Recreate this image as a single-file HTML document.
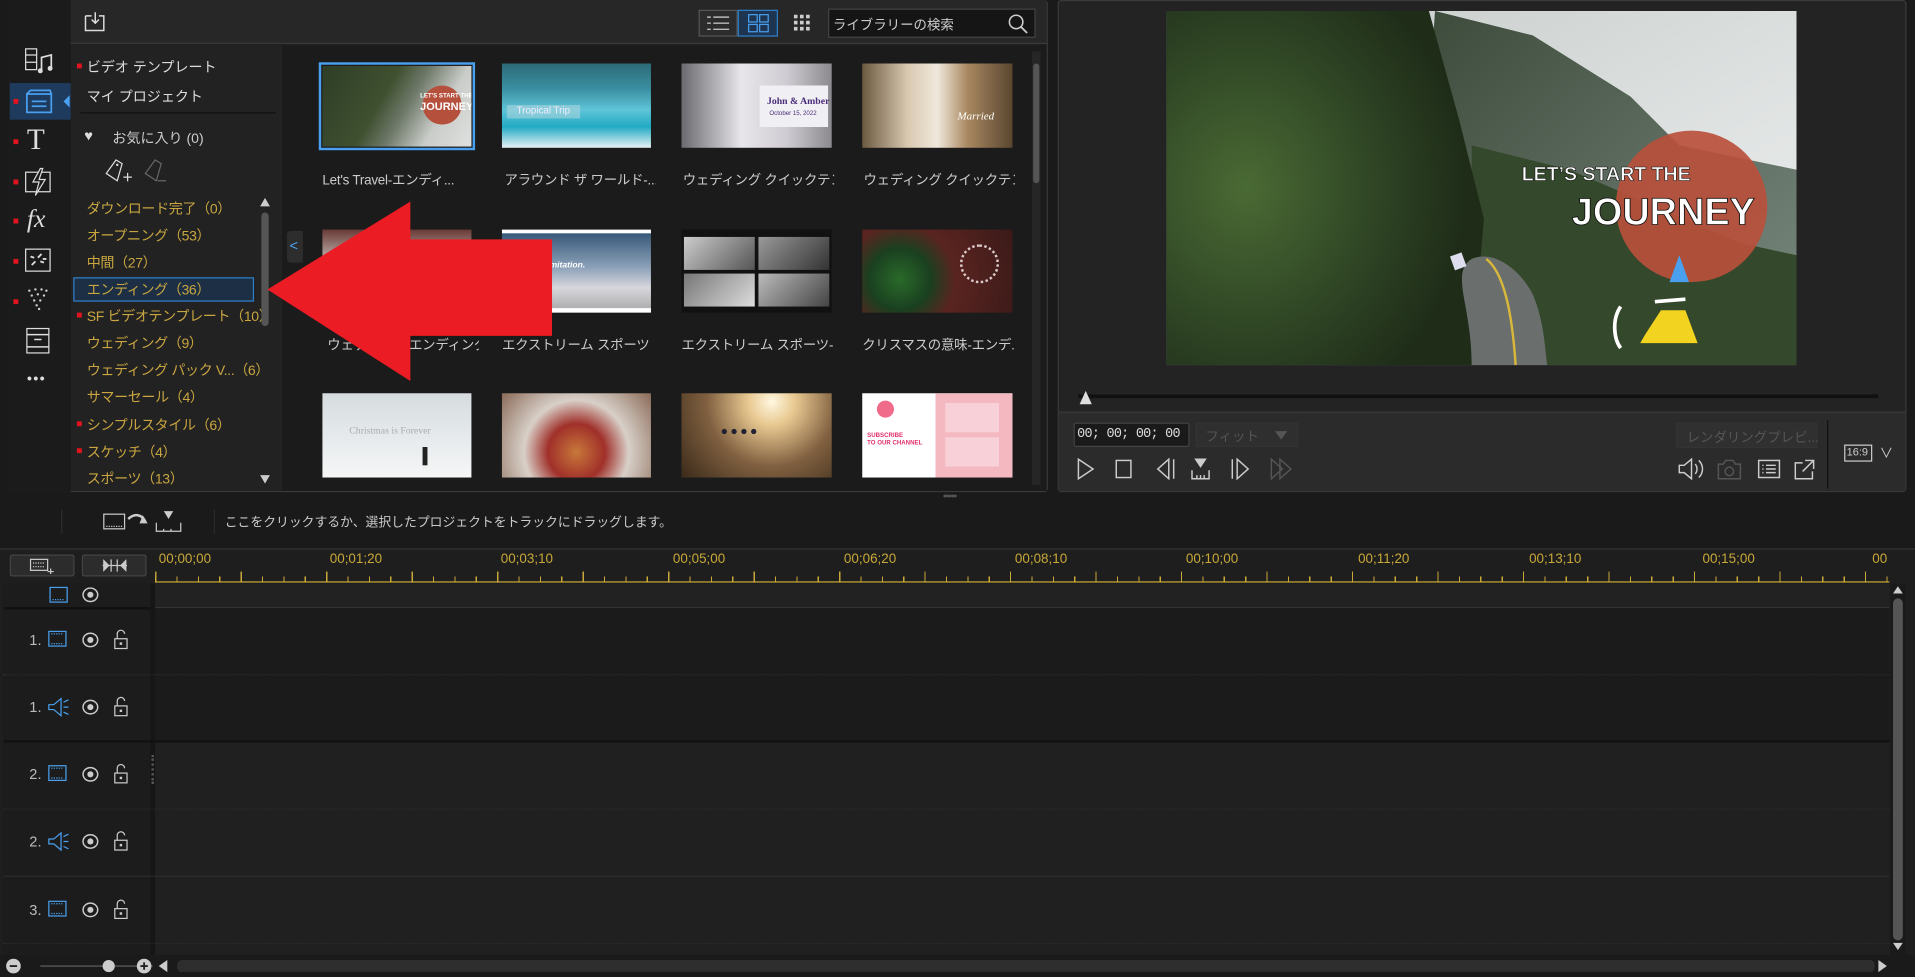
<!DOCTYPE html>
<html><head><meta charset="utf-8"><style>
*{margin:0;padding:0;box-sizing:border-box}
html,body{width:1915px;height:977px;overflow:hidden;background:#1a1a1a}
#w{position:absolute;left:0;top:0;width:1568px;height:800px;transform:scale(1.22130);transform-origin:0 0;font-family:"Liberation Sans","Noto Sans CJK JP",sans-serif;color:#ccc}
.a{position:absolute}
.t{position:absolute;white-space:nowrap}
.cat{position:absolute;left:71px;font-size:11.5px;color:#c9a640;white-space:nowrap;letter-spacing:-.3px}
.dot{position:absolute;left:63px;width:4px;height:4px;background:#e0141e}
.ldot{position:absolute;left:11px;width:4px;height:4px;background:#e0141e}
.th{position:absolute;overflow:hidden}
.lbl{position:absolute;font-size:11px;color:#ccc;white-space:nowrap;width:124px;overflow:hidden;letter-spacing:-.2px}
.ru{position:absolute;top:452px;font-size:11px;color:#c8a838}
.tn{position:absolute;left:24px;font-size:12px;color:#bbb}
</style></head><body><div id="w">

<div class="a" style="left:8px;top:0;width:850px;height:403px;background:#202020;border:1px solid #3a3a3a;border-radius:3px"></div>
<div class="a" style="left:8px;top:0;width:50px;height:403px;background:#1b1b1b"></div>
<div class="a" style="left:8px;top:68px;width:50px;height:30px;background:#1e3a5c"></div>
<div class="a" style="left:58px;top:0;width:799px;height:36px;background:#272727;border-bottom:1px solid #3a3a3a"></div>
<div class="a" style="left:58px;top:37px;width:173px;height:365px;background:#222"></div>
<div class="a" style="left:231px;top:37px;width:626px;height:365px;background:#1b1b1b"></div>

<svg class="a" style="left:68px;top:9px" width="20" height="18" viewBox="0 0 20 18"><path d="M2 4h5M13 4h4v12H2V4" fill="none" stroke="#ddd" stroke-width="1.2"/><path d="M10 1v9M7 7l3 3 3-3" fill="none" stroke="#ddd" stroke-width="1.2"/></svg>
<div class="a" style="left:572px;top:8px;width:32px;height:22px;border:1px solid #555;background:#2c2c2c"></div>
<svg class="a" style="left:578px;top:12px" width="20" height="14"><path d="M1 2h3M6 2h13M1 7h3M6 7h13M1 12h3M6 12h13" stroke="#bbb" stroke-width="1.2"/></svg>
<div class="a" style="left:604px;top:8px;width:33px;height:22px;border:1px solid #2f7fc8;background:#1d3550"></div>
<svg class="a" style="left:612px;top:11px" width="18" height="16"><rect x="1" y="1" width="7" height="6" fill="none" stroke="#4aa0ef"/><rect x="10" y="1" width="7" height="6" fill="none" stroke="#4aa0ef"/><rect x="1" y="9" width="7" height="6" fill="none" stroke="#4aa0ef"/><rect x="10" y="9" width="7" height="6" fill="none" stroke="#4aa0ef"/></svg>
<svg class="a" style="left:650px;top:12px" width="14" height="14"><g fill="#ccc"><rect x="0" y="0" width="3" height="3"/><rect x="5" y="0" width="3" height="3"/><rect x="10" y="0" width="3" height="3"/><rect x="0" y="5" width="3" height="3"/><rect x="5" y="5" width="3" height="3"/><rect x="10" y="5" width="3" height="3"/><rect x="0" y="10" width="3" height="3"/><rect x="5" y="10" width="3" height="3"/><rect x="10" y="10" width="3" height="3"/></g></svg>
<div class="a" style="left:678px;top:7px;width:170px;height:24px;background:#151515;border:1px solid #444"></div>
<div class="t" style="left:682px;top:12px;font-size:11px;color:#ccc">ライブラリーの検索</div>
<svg class="a" style="left:825px;top:11px" width="17" height="17"><circle cx="7" cy="7" r="5.5" fill="none" stroke="#ccc" stroke-width="1.3"/><path d="M11 11l5 5" stroke="#ccc" stroke-width="1.5"/></svg>

<svg class="a" style="left:20px;top:39px" width="24" height="22"><rect x="1" y="1" width="9" height="17" fill="none" stroke="#ddd"/><path d="M1 6h9M1 12h9" stroke="#ddd"/><path d="M14 19V8l8-2v11" fill="none" stroke="#ddd" stroke-width="1.4"/><circle cx="13" cy="19" r="2" fill="#ddd"/><circle cx="21" cy="17" r="2" fill="#ddd"/></svg>
<svg class="a" style="left:21px;top:73px" width="22" height="20"><rect x="1" y="4" width="20" height="15" fill="none" stroke="#4aa0ef" stroke-width="1.4"/><path d="M1 4l3-3h16l1 3" fill="none" stroke="#4aa0ef" stroke-width="1.4"/><path d="M5 10h12M5 14h12" stroke="#4aa0ef" stroke-width="1.4"/></svg>
<div class="a" style="left:52px;top:78px;width:0;height:0;border-top:5px solid transparent;border-bottom:5px solid transparent;border-right:5px solid #4aa0ef"></div>
<div class="t" style="left:22px;top:102px;font-family:'Liberation Serif',serif;font-size:24px;color:#ddd">T</div>
<svg class="a" style="left:20px;top:137px" width="24" height="24"><rect x="1" y="4" width="20" height="16" fill="none" stroke="#ddd"/><path d="M13 1l-6 11h5l-3 11 8-13h-5l3-9z" fill="#1b1b1b" stroke="#ddd"/></svg>
<div class="t" style="left:22px;top:167px;font-family:'Liberation Serif',serif;font-style:italic;font-size:21px;color:#ddd">fx</div>
<svg class="a" style="left:20px;top:203px" width="22" height="20"><rect x="1" y="1" width="20" height="18" fill="none" stroke="#ddd"/><path d="M6 14l3-3M14 5l-3 3M5 7l3 1M16 12l-3-1M15 9h3" stroke="#ddd" stroke-width="1.5"/></svg>
<svg class="a" style="left:21px;top:235px" width="20" height="22"><g fill="#ccc"><circle cx="3" cy="3" r="1"/><circle cx="8" cy="2" r="1"/><circle cx="13" cy="2" r="1"/><circle cx="17" cy="3" r="1"/><circle cx="5" cy="7" r="1"/><circle cx="10" cy="6" r="1"/><circle cx="15" cy="7" r="1"/><circle cx="7" cy="11" r="1"/><circle cx="12" cy="11" r="1"/><circle cx="9" cy="15" r="1"/><circle cx="11" cy="18" r="1"/></g></svg>
<svg class="a" style="left:21px;top:268px" width="20" height="22"><rect x="1" y="1" width="18" height="20" fill="none" stroke="#ddd"/><path d="M1 6h18M1 16h18M7 10h6" stroke="#ddd" stroke-width="1.2"/></svg>
<div class="t" style="left:22px;top:303px;font-size:12px;color:#ddd;letter-spacing:1px">•••</div>
<div class="ldot" style="top:81px"></div><div class="ldot" style="top:114px"></div><div class="ldot" style="top:147px"></div><div class="ldot" style="top:179px"></div><div class="ldot" style="top:212px"></div><div class="ldot" style="top:245px"></div>

<div class="dot" style="top:52px"></div>
<div class="t" style="left:71px;top:47px;font-size:11.5px;color:#ddd">ビデオ テンプレート</div>
<div class="t" style="left:71px;top:71px;font-size:11.5px;color:#ddd">マイ プロジェクト</div>
<div class="a" style="left:66px;top:92px;width:160px;height:1px;background:#111"></div>
<div class="t" style="left:69px;top:104px;font-size:12px;color:#ddd;line-height:14px">♥</div>
<div class="t" style="left:92px;top:105px;font-size:11.5px;color:#ccc">お気に入り (0)</div>
<svg class="a" style="left:84px;top:128px" width="60" height="26"><path d="M3 14L11 3l5 3-4 14z" fill="none" stroke="#ddd"/><circle cx="12" cy="7" r="1" fill="#ddd"/><path d="M17 17h7M20.5 13.5v7" stroke="#ddd"/><path d="M35 14l8-11 5 3-4 14z" fill="none" stroke="#666"/><path d="M45 20h7" stroke="#666"/></svg>
<div class="cat" style="top:163px">ダウンロード完了（0）</div>
<div class="cat" style="top:185px">オープニング（53）</div>
<div class="cat" style="top:207px">中間（27）</div>
<div class="a" style="left:60px;top:227px;width:148px;height:20px;background:#1c2f45;border:1px solid #2f7fc8"></div>
<div class="cat" style="top:229px">エンディング（36）</div>
<div class="dot" style="top:256px"></div><div class="cat" style="top:251px">SF ビデオテンプレート（10）</div>
<div class="cat" style="top:273px">ウェディング（9）</div>
<div class="cat" style="top:295px">ウェディング パック V...（6）</div>
<div class="cat" style="top:317px">サマーセール（4）</div>
<div class="dot" style="top:345px"></div><div class="cat" style="top:340px">シンプルスタイル（6）</div>
<div class="dot" style="top:367px"></div><div class="cat" style="top:362px">スケッチ（4）</div>
<div class="cat" style="top:384px">スポーツ（13）</div>
<div class="a" style="left:213px;top:162px;width:0;height:0;border-left:4px solid transparent;border-right:4px solid transparent;border-bottom:7px solid #ccc"></div>
<div class="a" style="left:214px;top:174px;width:6px;height:93px;background:#555;border-radius:3px"></div>
<div class="a" style="left:213px;top:389px;width:0;height:0;border-left:4px solid transparent;border-right:4px solid transparent;border-top:7px solid #ccc"></div>
<div class="a" style="left:235px;top:189px;width:13px;height:26px;background:#2d2d2d;border-radius:3px 0 0 3px"></div>
<div class="t" style="left:237px;top:194px;font-size:12px;color:#4aa0ef">&lt;</div>

<div class="a" style="left:261px;top:51px;width:128px;height:72px;border:2px solid #4aa0ef"></div>
<div class="th" style="left:264px;top:54px;width:122px;height:66px;background:linear-gradient(120deg,#2e3d26 0%,#3f5030 40%,#6d7868 55%,#c9ccc8 75%,#dfe1e0 100%)">
<div class="a" style="left:82px;top:16px;width:32px;height:32px;border-radius:50%;background:#b5503d"></div>
<div class="t" style="left:80px;top:22px;font-size:5px;color:#fff;font-weight:bold">LET'S START THE</div>
<div class="t" style="left:80px;top:28px;font-size:9px;color:#fff;font-weight:bold">JOURNEY</div></div>
<div class="th" style="left:411px;top:52px;width:122px;height:69px;background:linear-gradient(180deg,#2d6a78 0%,#3a8fa0 30%,#5fc4d8 55%,#22aac4 75%,#e8f2f4 100%)">
<div class="a" style="left:4px;top:34px;width:60px;height:11px;background:rgba(200,220,225,.45)"></div>
<div class="t" style="left:12px;top:34px;font-size:8px;color:#eef">Tropical Trip</div></div>
<div class="th" style="left:558px;top:52px;width:123px;height:69px;background:linear-gradient(90deg,#6a6a70,#e8e6ea 40%,#cfcbd2 70%,#8c8a8e)">
<div class="a" style="left:64px;top:18px;width:56px;height:34px;background:#f0eff4"></div>
<div class="t" style="left:70px;top:26px;font-size:8px;color:#4a2d7a;font-weight:bold;font-family:'Liberation Serif',serif">John &amp; Amber</div>
<div class="t" style="left:72px;top:38px;font-size:5px;color:#4a2d7a">October 15, 2022</div></div>
<div class="th" style="left:706px;top:52px;width:123px;height:69px;background:linear-gradient(90deg,#6c5a40,#d8c8b0 30%,#f0e8dc 50%,#a88860 70%,#5a4630)">
<div class="t" style="left:78px;top:38px;font-size:9px;color:#fff;font-style:italic;font-family:'Liberation Serif',serif">Married</div></div>
<div class="lbl" style="left:264px;top:139px">Let's Travel-エンディ...</div>
<div class="lbl" style="left:413px;top:139px">アラウンド ザ ワールド-...</div>
<div class="lbl" style="left:559px;top:139px">ウェディング クイックテン...</div>
<div class="lbl" style="left:707px;top:139px">ウェディング クイックテン...</div>

<div class="th" style="left:264px;top:188px;width:122px;height:68px;background:linear-gradient(180deg,#6a3a36,#c8c0bc 40%,#3a2a28)"></div>
<div class="th" style="left:411px;top:188px;width:122px;height:68px;background:linear-gradient(180deg,#fff 0,#fff 4%,#3a5a7a 5%,#8aa0b8 45%,#d8d8dc 70%,#b0aeb0 94%,#fff 95%)">
<div class="t" style="left:4px;top:26px;font-size:7px;color:#fff;font-style:italic;font-weight:bold">Up Your Limitation.</div></div>
<div class="th" style="left:558px;top:188px;width:123px;height:68px;background:#111">
<div class="a" style="left:2px;top:6px;width:58px;height:27px;background:linear-gradient(135deg,#ccc,#555)"></div><div class="a" style="left:63px;top:6px;width:58px;height:27px;background:linear-gradient(135deg,#999,#333)"></div>
<div class="a" style="left:2px;top:36px;width:58px;height:27px;background:linear-gradient(135deg,#777,#ddd)"></div><div class="a" style="left:63px;top:36px;width:58px;height:27px;background:linear-gradient(135deg,#bbb,#444)"></div></div>
<div class="th" style="left:706px;top:188px;width:123px;height:68px;background:radial-gradient(circle at 25% 60%,#2a6a2a 0,#1a4020 25%,#5a2420 45%,#3a1a18 100%)">
<div class="a" style="left:80px;top:12px;width:32px;height:32px;border-radius:50%;border:2px dotted #dcc"></div></div>
<div class="lbl" style="left:268px;top:274px">ウェディング エンディング</div>
<div class="lbl" style="left:411px;top:274px">エクストリーム スポーツ ...</div>
<div class="lbl" style="left:558px;top:274px">エクストリーム スポーツ-...</div>
<div class="lbl" style="left:706px;top:274px">クリスマスの意味-エンデ...</div>

<div class="th" style="left:264px;top:322px;width:122px;height:69px;background:linear-gradient(180deg,#d6dcde,#e8ecee 60%,#f6f6f6)">
<div class="t" style="left:22px;top:26px;font-size:8px;color:#aaa;font-family:'Liberation Serif',serif">Christmas is Forever</div>
<div class="a" style="left:82px;top:44px;width:4px;height:15px;background:#222"></div></div>
<div class="th" style="left:411px;top:322px;width:122px;height:69px;background:radial-gradient(circle at 50% 70%,#c8783a,#a0302a 30%,#d8d0c8 55%,#8a6a58)"></div>
<div class="th" style="left:558px;top:322px;width:123px;height:69px;background:radial-gradient(circle at 60% 10%,#fff8e0,#e8c890 20%,#806040 55%,#3a2a1a)">
<div class="t" style="left:32px;top:26px;font-size:10px;color:#223;letter-spacing:2px">●●●●</div></div>
<div class="th" style="left:706px;top:322px;width:123px;height:69px;background:#fff">
<div class="a" style="left:60px;top:0;width:63px;height:69px;background:#f4b8c0"></div>
<div class="a" style="left:68px;top:8px;width:44px;height:24px;background:#f8d0d8"></div>
<div class="a" style="left:68px;top:36px;width:44px;height:24px;background:#f8d0d8"></div>
<div class="a" style="left:12px;top:6px;width:14px;height:14px;border-radius:50%;background:#f06a8a"></div>
<div class="t" style="left:4px;top:32px;font-size:5px;color:#e0306a;font-weight:bold">SUBSCRIBE<br>TO OUR CHANNEL</div></div>
<div class="a" style="left:845px;top:42px;width:7px;height:355px;background:#262626"></div>
<div class="a" style="left:846px;top:52px;width:5px;height:98px;background:#555;border-radius:3px"></div>

<svg class="a" style="left:0;top:0" width="500" height="400"><polygon points="219,237 336,165 336,196 452,196 452,275 336,275 336,312" fill="#ec1c24"/></svg>

<div class="a" style="left:866px;top:0;width:695px;height:403px;background:#232323;border:1px solid #3a3a3a;border-radius:3px"></div>
<svg class="a" style="left:955px;top:9px" width="516" height="290" viewBox="0 0 516 290">
<defs><linearGradient id="sky" x1="0" y1="0" x2="1" y2="1"><stop offset="0" stop-color="#c4cac8"/><stop offset="1" stop-color="#f0f2f2"/></linearGradient>
<linearGradient id="mt" x1="0" y1="0" x2="1" y2="1"><stop offset="0" stop-color="#3c4a3a"/><stop offset="1" stop-color="#7a8a80"/></linearGradient>
<radialGradient id="fl" cx=".25" cy=".5" r=".7"><stop offset="0" stop-color="#4a6a34"/><stop offset=".6" stop-color="#2e4424"/><stop offset="1" stop-color="#1e2c18"/></radialGradient></defs>
<rect width="516" height="290" fill="url(#sky)"/>
<path d="M220 0 L300 20 L380 70 L420 110 L516 130 L516 290 L200 290z" fill="url(#mt)"/>
<path d="M250 110 L330 130 L400 160 L470 190 L516 200 L516 290 L250 290z" fill="#34482c"/>
<path d="M0 0 L215 0 L240 90 L260 170 L250 290 L0 290z" fill="url(#fl)"/>
<path d="M250 290 C250 240 232 215 250 203 C268 195 290 212 300 232 C310 255 310 280 312 290z" fill="#6a6e6c"/>
<path d="M262 203 C276 214 283 245 286 290" stroke="#d8b83a" stroke-width="2" fill="none"/>
<rect x="234" y="199" width="10" height="12" fill="#dde" transform="rotate(-20 239 205)"/>
<circle cx="430" cy="160" r="62" fill="#b8503c" opacity=".92"/>
<text x="291" y="139" font-family="Liberation Sans" font-weight="bold" font-size="16" fill="#fff" stroke="#111" stroke-width=".5">LET’S START THE</text>
<text x="332" y="175" font-family="Liberation Sans" font-weight="bold" font-size="31" fill="#fff" stroke="#111" stroke-width=".7">JOURNEY</text>
<path d="M420 200 L412 222 L428 222z" fill="#4aa0ef"/>
<path d="M392 265 L405 245 L425 245 L435 272 L388 272z" fill="#f2d320"/>
<path d="M372 242 C365 252 366 268 372 276" stroke="#fff" stroke-width="3" fill="none"/>
<path d="M400 238 L425 236" stroke="#fff" stroke-width="3"/>
</svg>
<div class="a" style="left:883px;top:323px;width:655px;height:3px;background:#111"></div>
<svg class="a" style="left:882px;top:319px" width="14" height="14"><path d="M2 12L7 1l5 11z" fill="#ddd"/></svg>
<div class="a" style="left:867px;top:337px;width:693px;height:65px;background:#2b2b2b;border-top:1px solid #3a3a3a"></div>
<div class="a" style="left:879px;top:346px;width:95px;height:20px;background:#1a1a1a;border:1px solid #444;border-radius:2px"></div>
<div class="t" style="left:882px;top:350px;font-size:11px;color:#ddd;font-family:'Liberation Mono',monospace;letter-spacing:-.6px">00; 00; 00; 00</div>
<div class="a" style="left:979px;top:346px;width:84px;height:20px;background:#2f2f2f;border:1px solid #333"></div>
<div class="t" style="left:987px;top:349px;font-size:11px;color:#555">フィット</div>
<div class="a" style="left:1044px;top:353px;border-left:5px solid transparent;border-right:5px solid transparent;border-top:7px solid #555"></div>
<div class="a" style="left:1372px;top:346px;width:116px;height:21px;background:#303030;border:1px solid #333"></div>
<div class="t" style="left:1381px;top:350px;font-size:11px;color:#555">レンダリングプレビ...</div>
<div class="a" style="left:1496px;top:344px;width:1px;height:56px;background:#111"></div>
<div class="a" style="left:1510px;top:364px;width:23px;height:14px;border:1px solid #ccc"></div>
<div class="t" style="left:1512px;top:365px;font-size:9px;color:#ccc">16:9</div>
<div class="t" style="left:1539px;top:363px;font-size:11px;color:#ccc">∨</div>
<svg class="a" style="left:878px;top:374px" width="190" height="20" viewBox="0 0 190 20" fill="none" stroke="#ccc" stroke-width="1.2">
<path d="M5 2l12 8-12 8z"/><rect x="36" y="3" width="12" height="14"/><path d="M79 2l-9 8 9 8zM83 2v16"/><path d="M101 2h8l-4 6z" fill="#ccc"/><path d="M98 11v7h14v-7M102 15v3M105 15v3M108 15v3"/><path d="M131 2v16M135 2l9 8-9 8z"/><path stroke="#555" d="M163 2l9 8-9 8zM170 2l9 8-9 8z"/></svg>
<svg class="a" style="left:1372px;top:374px" width="120" height="20" viewBox="0 0 120 20" fill="none" stroke="#ccc" stroke-width="1.2">
<path d="M3 7h4l6-5v16l-6-5H3z"/><path d="M16 6c2 2 2 6 0 8M19 3c4 4 4 10 0 14"/><path stroke="#555" d="M35 6h4l2-3h6l2 3h4v12H35z"/><circle stroke="#555" cx="44" cy="12" r="3.5"/><rect x="68" y="3" width="17" height="14"/><path d="M71 7h1M74 7h8M71 10h1M74 10h8M71 13h1M74 13h8"/><path d="M104 5h-6v13h14v-6M106 3h7v7M113 3l-9 9"/></svg>

<div class="t" style="left:772px;top:401px;font-size:9px;color:#555;letter-spacing:-1px">•••••</div>
<div class="a" style="left:50px;top:417px;width:1px;height:20px;background:#2c2c2c"></div>
<svg class="a" style="left:84px;top:417px" width="68" height="20" fill="none" stroke="#ccc" stroke-width="1"><rect x="1" y="4" width="17" height="12"/><path d="M3 14h13" stroke-dasharray="1 1"/><path d="M21 8c5-5 11-4 14 2" stroke-width="2"/><path d="M33 6l3 5-5 0z" fill="#ccc"/><path d="M44 11v7h20v-7M50 16v2M56 16v2"/><path d="M51 2h6l-3 5z" fill="#ccc"/></svg>
<div class="a" style="left:175px;top:417px;width:1px;height:20px;background:#2c2c2c"></div>
<div class="t" style="left:184px;top:420px;font-size:10.5px;color:#ccc">ここをクリックするか、選択したプロジェクトをトラックにドラッグします。</div>

<div class="a" style="left:0;top:449px;width:1568px;height:351px;background:#1e1e1e;border-top:1px solid #333"></div>
<div class="a" style="left:8px;top:454px;width:53px;height:18px;background:#2c2c2c;border:1px solid #444;border-radius:2px"></div>
<svg class="a" style="left:24px;top:456px" width="22" height="14" fill="none" stroke="#ccc"><rect x="1" y="2" width="14" height="9"/><path d="M3 5h10M3 8h10" stroke-dasharray="1 1"/><path d="M15 12h5M17.5 9.5v5"/></svg>
<div class="a" style="left:67px;top:454px;width:53px;height:18px;background:#2c2c2c;border:1px solid #444;border-radius:2px"></div>
<svg class="a" style="left:83px;top:456px" width="22" height="14" fill="none" stroke="#ccc"><path d="M1 7h20M8 2v10M13 2v10"/><path d="M2 3l4 4-4 4zM20 3l-4 4 4 4z" fill="#ccc"/></svg>
<div class="ru" style="left:130px">00;00;00</div><div class="ru" style="left:270px">00;01;20</div><div class="ru" style="left:410px">00;03;10</div><div class="ru" style="left:551px">00;05;00</div><div class="ru" style="left:691px">00;06;20</div><div class="ru" style="left:831px">00;08;10</div><div class="ru" style="left:971px">00;10;00</div><div class="ru" style="left:1112px">00;11;20</div><div class="ru" style="left:1252px">00;13;10</div><div class="ru" style="left:1394px">00;15;00</div><div class="ru" style="left:1533px">00</div>
<div class="a" style="left:127px;top:468px;width:1420px;height:9px;border-bottom:1px solid #c8a838;background:repeating-linear-gradient(90deg,#c8a838 0,#c8a838 1px,transparent 1px,transparent 17.5px);background-position:0 4px;background-size:100% 5px;background-repeat:repeat-x"></div>
<div class="a" style="left:127px;top:468px;width:1420px;height:9px;background:repeating-linear-gradient(90deg,#c8a838 0,#c8a838 1px,transparent 1px,transparent 70px)"></div>
<div class="a" style="left:3px;top:478px;width:120px;height:304px;background:#1c1c1c"></div>
<div class="a" style="left:123px;top:478px;width:4px;height:304px;background:#161616"></div>
<div class="a" style="left:127px;top:478px;width:1420px;height:20px;background:#222;border-bottom:1px solid #333"></div>
<div class="a" style="left:127px;top:498px;width:1420px;height:109px;background:#1b1b1b"></div>
<div class="a" style="left:127px;top:607px;width:1420px;height:175px;background:#202020"></div>
<div class="a" style="left:3px;top:606px;width:1544px;height:2px;background:#111"></div>
<div class="a" style="left:3px;top:552px;width:1544px;border-top:1px dotted #2c2c2c"></div>
<div class="a" style="left:3px;top:662px;width:1544px;border-top:1px dotted #2c2c2c"></div>
<div class="a" style="left:3px;top:717px;width:1544px;height:1px;background:#2c2c2c"></div>
<div class="a" style="left:3px;top:772px;width:1544px;border-top:1px dotted #2c2c2c"></div>
<div class="a" style="left:3px;top:497px;width:120px;height:2px;background:#111"></div>
<svg class="a" style="left:40px;top:480px" width="44" height="16" fill="none"><rect x="1" y="1" width="14" height="12" stroke="#4aa0ef"/><path d="M3 11h10" stroke="#4aa0ef" stroke-dasharray="1 1"/><ellipse cx="34" cy="7" rx="6" ry="5.5" stroke="#ccc" stroke-width="1.2"/><circle cx="34" cy="7" r="2.5" fill="#ccc"/></svg>

<div class="tn" style="top:517px">1.</div><div class="tn" style="top:572px">1.</div><div class="tn" style="top:627px">2.</div><div class="tn" style="top:682px">2.</div><div class="tn" style="top:738px">3.</div>
<svg class="a" style="left:38px;top:514px" width="70" height="240" fill="none">
<g id="v"><rect x="2" y="3" width="14" height="12" stroke="#4aa0ef"/><path d="M4 13h10M4 5h10" stroke="#4aa0ef" stroke-dasharray="1 1"/></g>
<g id="e"><ellipse cx="36" cy="10" rx="6" ry="5.5" stroke="#ccc" stroke-width="1.2"/><circle cx="36" cy="10" r="2.5" fill="#ccc"/></g>
<g id="l"><rect x="56" y="9" width="10" height="8" stroke="#ccc"/><path d="M58 9V5a3 3 0 0 1 6 0" stroke="#ccc"/><rect x="60" y="12" width="2" height="2" fill="#ccc"/></g>
<g transform="translate(0,55)"><path d="M2 8h4l6-5v14l-6-5H2z" stroke="#4aa0ef"/><path d="M14 6l4-2M14 10h4M14 14l4 2" stroke="#4aa0ef"/><use href="#e"/><use href="#l"/></g>
<g transform="translate(0,110)"><use href="#v"/><use href="#e"/><use href="#l"/></g>
<g transform="translate(0,165)"><path d="M2 8h4l6-5v14l-6-5H2z" stroke="#4aa0ef"/><path d="M14 6l4-2M14 10h4M14 14l4 2" stroke="#4aa0ef"/><use href="#e"/><use href="#l"/></g>
<g transform="translate(0,221)"><use href="#v"/><use href="#e"/><use href="#l"/></g>
</svg>
<div class="a" style="left:124px;top:618px;width:2px;height:24px;border-left:2px dotted #555"></div>
<div class="a" style="left:1548px;top:478px;width:12px;height:304px;background:#1a1a1a"></div>
<div class="a" style="left:1550px;top:480px;border-left:4px solid transparent;border-right:4px solid transparent;border-bottom:6px solid #ccc"></div>
<div class="a" style="left:1550px;top:490px;width:8px;height:280px;background:#555;border-radius:4px"></div>
<div class="a" style="left:1550px;top:772px;border-left:4px solid transparent;border-right:4px solid transparent;border-top:6px solid #ccc"></div>
<div class="a" style="left:0;top:782px;width:1568px;height:18px;background:#1a1a1a"></div>
<svg class="a" style="left:3px;top:784px" width="140" height="14"><circle cx="8" cy="7" r="6" fill="#ccc"/><path d="M5 7h6" stroke="#222" stroke-width="1.5"/><path d="M30 7h92" stroke="#666"/><circle cx="86" cy="7" r="5" fill="#ccc"/><circle cx="115" cy="7" r="6" fill="#ccc"/><path d="M112 7h6M115 4v6" stroke="#222" stroke-width="1.5"/></svg>
<div class="a" style="left:130px;top:786px;border-top:5px solid transparent;border-bottom:5px solid transparent;border-right:7px solid #ccc"></div>
<div class="a" style="left:145px;top:786px;width:1390px;height:10px;background:#2e2e2e;border-radius:4px"></div>
<div class="a" style="left:1538px;top:786px;border-top:5px solid transparent;border-bottom:5px solid transparent;border-left:7px solid #ccc"></div>
</div></body></html>
